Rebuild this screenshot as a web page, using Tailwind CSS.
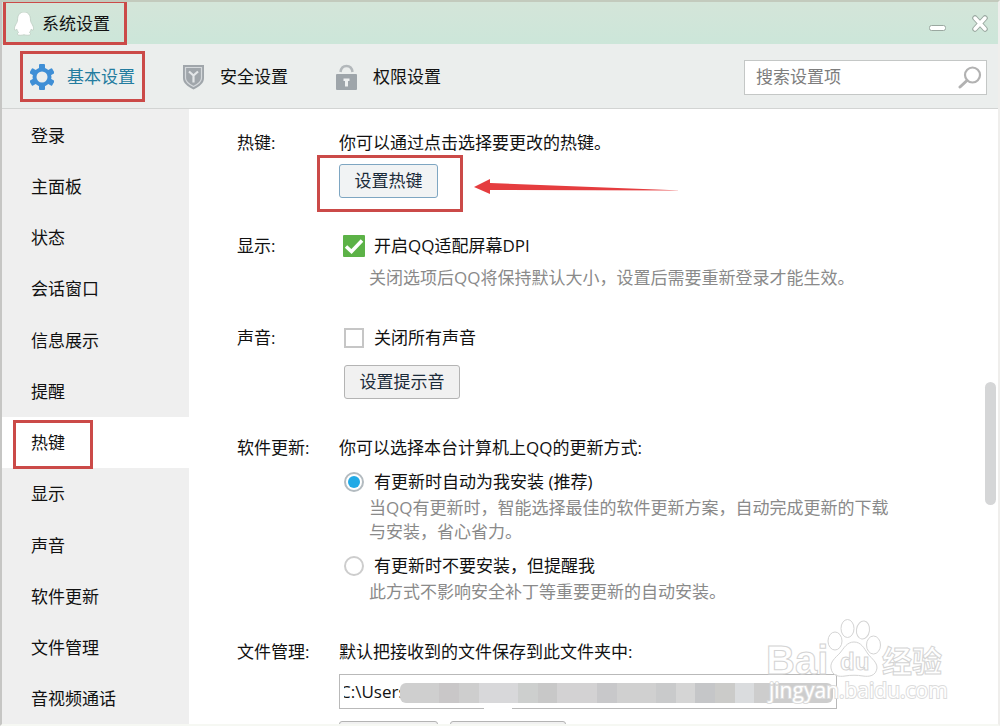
<!DOCTYPE html>
<html lang="zh">

<head>
    <meta charset="UTF-8">
    <meta name="viewport" content="width=device-width, initial-scale=1.0">
    <title>系统设置</title>
    <script src="https://cdn.jsdelivr.net/npm/@tailwindcss/browser@4"></script>
</head>

<body class="h-screen flex flex-col overflow-hidden bg-white border-t-2 border-t-[#c3cabd] border-l-2 border-l-[#c6c6c4] border-r-2 border-r-[#efeeec] border-b-2 border-b-[#f6f8f3] font-['Open_Sans','Noto_Sans_CJK_SC',sans-serif] text-[17px] leading-6 text-[#111111]">
    <!-- 标题栏 -->
    <header class="h-[42px] shrink-0 flex items-center justify-between pr-2 bg-linear-to-b from-[#d4e5d9] to-[#cce6d9]">
        <div class="relative flex items-center gap-2 pl-3 pt-0.5">
            <svg class="w-5 h-6" viewBox="0 0 20 24">
                <path d="M10 0C6 0 3.500 3 3.500 8c0 2-1 3-2 5-1 2-1.500 4-.8 5 .6.500 1.300 0 2-1 .300 1.500 1 2.500 1.800 3.500-1 .500-1.200 1.200-.9 2 .5 1 4.400 1 6.400.200 2 .800 5.900.800 6.400-.200.300-.800.100-1.500-.9-2 .800-1 1.500-2 1.800-3.500.7 1 1.400 1.500 2 1 .7-1 .2-3-.8-5-1-2-2-3-2-5 0-5-2.500-8-6.500-8z" fill="#fff" stroke="#bccdc2" stroke-width="0.800" />
            </svg>
            <h1>系统设置</h1>
            <span class="absolute left-[1px] -top-[10px] w-[124px] h-[45px] border-[3px] border-[#cb4a48]"></span>
        </div>
        <div class="flex items-center gap-[22px]">
            <button type="button" aria-label="最小化" class="w-5 h-5">
                <svg class="w-5 h-5" viewBox="0 0 20 20">
                    <rect x="1.500" y="12.500" width="16" height="5" rx="2" fill="#fff" stroke="#9aa8a0" />
                </svg>
            </button>
            <button type="button" aria-label="关闭" class="w-5 h-5">
                <svg class="w-5 h-5" viewBox="0 0 20 20" stroke-linecap="round">
                    <path d="M5 5l10 11M15 5L5 16" stroke="#9aa8a0" stroke-width="5.500" />
                    <path d="M5 5l10 11M15 5L5 16" stroke="#fff" stroke-width="3.500" />
                </svg>
            </button>
        </div>
    </header>

    <!-- 顶部标签 -->
    <div class="h-[65px] shrink-0 flex items-center justify-between pl-7 pr-[11px] pt-0.5 bg-[#ebeeed] border-b border-[#d2d4d3]">
        <nav class="flex items-center gap-12">
            <a href="#basic" class="relative flex items-center gap-[13px] text-[#237c9f]">
                <svg class="w-6 h-[26px]" viewBox="0 0 24 26">
                    <g fill="#3f8fd6">
                        <rect x="9" y="0" width="6" height="26" rx="1" />
                        <rect x="9" y="0" width="6" height="26" rx="1" transform="rotate(60 12 13)" />
                        <rect x="9" y="0" width="6" height="26" rx="1" transform="rotate(120 12 13)" />
                        <circle cx="12" cy="13" r="9.500" />
                    </g>
                    <circle cx="12" cy="13" r="5.500" fill="#ebeeed" />
                </svg>
                基本设置
                <span class="absolute -left-[10px] -top-[13px] w-[125px] h-[51px] border-[3px] border-[#cb4a48]"></span>
            </a>
            <a href="#security" class="flex items-center gap-[13px]">
                <svg class="w-6 h-[26px]" viewBox="0 0 24 26">
                    <path d="M0 1h21v13c0 5-4 8-10.500 11.500C4 22 0 19 0 14z" fill="#a0a6ab" />
                    <path d="M2.500 3.500h16v10.500c0 4-3 6-8 8.500-5-2.500-8-4.500-8-8.500z" fill="none" stroke="#d5d9dc" stroke-width="1.200" />
                    <path d="M6 7.500l4.500 4 4.500-4M10.500 11.500v7" fill="none" stroke="#e3e6e8" stroke-width="2.200" />
                </svg>
                安全设置
            </a>
            <a href="#privacy" class="flex items-center gap-[13px]">
                <svg class="w-6 h-[26px]" viewBox="0 0 24 26">
                    <path d="M4.500 8C5 4 7.500 2 10.500 2s5.500 2 6 6" fill="none" stroke="#b3b8bb" stroke-width="2.500" />
                    <rect x="0" y="10" width="21" height="16" rx="1" fill="#9ea5aa" />
                    <path d="M7.500 14.500h6v2.500h-1.500v5.500h-3v-5.500h-1.500z" fill="#eef0f0" />
                </svg>
                权限设置
            </a>
        </nav>
        <label class="flex items-center w-[243px] h-[35px] pl-[11px] pr-1 bg-white border border-[#c4c7c6]">
            <input type="text" aria-label="搜索" placeholder="搜索设置项" class="flex-1 min-w-0 outline-none placeholder:text-[#7d7d7d]">
            <svg class="w-6 h-6" viewBox="0 0 24 24" fill="none" stroke="#b2b2b2" stroke-linecap="round">
                <circle cx="14.500" cy="10" r="7.500" stroke-width="2.200" />
                <path d="M9 15.500l-7 6.500" stroke-width="3" />
            </svg>
        </label>
    </div>

    <div class="relative flex-1 min-h-0 flex">
        <!-- 左侧菜单 -->
        <nav class="w-[187px] shrink-0 flex flex-col bg-[#efefef]">
            <a href="#login" class="flex-1 flex items-center pl-[29px] pt-0.5">登录</a>
            <a href="#panel" class="flex-1 flex items-center pl-[29px] pt-0.5">主面板</a>
            <a href="#status" class="flex-1 flex items-center pl-[29px] pt-0.5">状态</a>
            <a href="#chat" class="flex-1 flex items-center pl-[29px] pt-0.5">会话窗口</a>
            <a href="#info" class="flex-1 flex items-center pl-[29px] pt-0.5">信息展示</a>
            <a href="#remind" class="flex-1 flex items-center pl-[29px] pt-0.5">提醒</a>
            <a href="#hotkey" class="relative flex-1 flex items-center pl-[29px] pt-0.5 bg-white">
                热键
                <span class="absolute left-[11px] top-[3px] w-20 h-[49px] border-[3px] border-[#cb4a48]"></span>
            </a>
            <a href="#display" class="flex-1 flex items-center pl-[29px] pt-0.5">显示</a>
            <a href="#sound" class="flex-1 flex items-center pl-[29px] pt-0.5">声音</a>
            <a href="#update" class="flex-1 flex items-center pl-[29px] pt-0.5">软件更新</a>
            <a href="#files" class="flex-1 flex items-center pl-[29px] pt-0.5">文件管理</a>
            <a href="#av" class="flex-1 flex items-center pl-[29px] pt-0.5">音视频通话</a>
        </nav>

        <!-- 设置内容 -->
        <main class="flex-1 min-w-0 overflow-hidden flex flex-col gap-9 pt-[22px] pl-12 pr-20">
            <section class="grid grid-cols-[102px_1fr]">
                <h2>热键:</h2>
                <div>
                    <p>你可以通过点击选择要更改的热键。</p>
                    <div class="relative mt-[9px] w-fit">
                        <button type="button" class="block w-[99px] h-[34px] rounded-[3px] border border-[#7ea6c2] bg-[#f1f3f4] text-[#1b2b3a]">设置热键</button>
                        <span class="absolute -left-[22px] -top-[9px] w-[146px] h-[57px] border-[3px] border-[#cb4a48]"></span>
                        <svg class="absolute left-[135px] top-[14px] w-[210px] h-4 max-w-none" viewBox="0 0 210 16">
                            <path d="M0 9L16 1v4L208 12.500 16 12v4z" fill="#e53d3f" />
                        </svg>
                    </div>
                </div>
            </section>

            <section class="grid grid-cols-[102px_1fr]">
                <h2>显示:</h2>
                <div>
                    <label class="flex items-center gap-[9px] pl-1">
                        <span class="relative grid place-items-center w-[22px] h-[22px]">
                            <input type="checkbox" checked class="appearance-none w-[22px] h-[22px] rounded-[1px] bg-[#5cb247]">
                            <svg class="absolute inset-0 w-[22px] h-[22px]" viewBox="0 0 22 22">
                                <path d="M3 11.500l5.500 5L19 5.500" fill="none" stroke="#fff" stroke-width="3.500" />
                            </svg>
                        </span>
                        开启QQ适配屏幕DPI
                    </label>
                    <p class="mt-2 pl-[30px] text-[#8a8a8a]">关闭选项后QQ将保持默认大小，设置后需要重新登录才能生效。</p>
                </div>
            </section>

            <section class="grid grid-cols-[102px_1fr]">
                <h2>声音:</h2>
                <div>
                    <label class="flex items-center gap-[9px] pl-1">
                        <span class="grid place-items-center w-[22px] h-[22px]">
                            <input type="checkbox" class="appearance-none w-5 h-5 border-2 border-[#c6c6c6] bg-white">
                        </span>
                        关闭所有声音
                    </label>
                    <button type="button" class="block mt-[15px] ml-[5px] w-[116px] h-[34px] rounded-[3px] border border-[#b4b4b4] bg-[#f1f1f1] text-[#1b2b3a]">设置提示音</button>
                </div>
            </section>

            <section class="grid grid-cols-[102px_1fr] pt-px">
                <h2>软件更新:</h2>
                <div>
                    <p>你可以选择本台计算机上QQ的更新方式:</p>
                    <label class="mt-[10px] flex items-center gap-[9px] pl-1">
                        <span class="relative grid place-items-center w-[22px] h-[22px]">
                            <input type="radio" name="update" checked class="appearance-none w-5 h-5 rounded-full border-2 border-[#b3bbc0] bg-white">
                            <span class="absolute left-[5px] top-[5px] w-3 h-3 rounded-full bg-[#22aae6]"></span>
                        </span>
                        有更新时自动为我安装 (推荐)
                    </label>
                    <p class="mt-[2px] pl-[30px] text-[#8a8a8a]">当QQ有更新时，智能选择最佳的软件更新方案，自动完成更新的下载<br>与安装，省心省力。</p>
                    <label class="mt-[10px] flex items-center gap-[9px] pl-1">
                        <span class="grid place-items-center w-[22px] h-[22px]">
                            <input type="radio" name="update" class="appearance-none w-5 h-5 rounded-full border-2 border-[#cdcdcd] bg-white">
                        </span>
                        有更新时不要安装，但提醒我
                    </label>
                    <p class="mt-[2px] pl-[30px] text-[#8a8a8a]">此方式不影响安全补丁等重要更新的自动安装。</p>
                </div>
            </section>

            <section class="grid grid-cols-[102px_1fr]">
                <h2>文件管理:</h2>
                <div>
                    <p>默认把接收到的文件保存到此文件夹中:</p>
                    <div class="relative mt-[10px] w-[498px]">
                        <input type="text" aria-label="文件夹" value="C:\Users" class="block w-full h-[35px] pl-1 -indent-1 border border-[#b9b9b9] bg-white outline-none">
                        <!-- 路径打码 -->
                        <div class="absolute left-[61px] right-1 top-[9px] h-5 flex rounded-md overflow-hidden">
                            <span class="flex-2 bg-[#cfcfcf]"></span>
                            <span class="flex-1 bg-[#c9c7c8]"></span>
                            <span class="flex-1 bg-[#cecece]"></span>
                            <span class="flex-2 bg-[#d8d8da]"></span>
                            <span class="flex-1 bg-[#cdcfce]"></span>
                            <span class="flex-1 bg-[#c8c8c8]"></span>
                            <span class="flex-2 bg-[#d3d2d3]"></span>
                            <span class="flex-1 bg-[#c8c8ca]"></span>
                            <span class="flex-2 bg-[#d0d0d0]"></span>
                            <span class="flex-1 bg-[#c9cacb]"></span>
                            <span class="flex-1 bg-[#d5d5d5]"></span>
                            <span class="flex-1 bg-[#c5c6c8]"></span>
                            <span class="flex-1 bg-[#cbcbc9]"></span>
                            <span class="flex-1 bg-[#dadcde]"></span>
                            <span class="flex-4 bg-[#cdcdcd]"></span>
                        </div>
                        <span class="absolute left-[145px] bottom-0 w-7 h-1 bg-white"></span>
                    </div>
                    <div class="mt-3 flex gap-3">
                        <button type="button" aria-label="更改目录" class="w-[99px] h-[35px] rounded-[3px] border border-[#b4b4b4] bg-[#f1f1f1]"></button>
                        <button type="button" aria-label="打开文件夹" class="w-[116px] h-[35px] rounded-[3px] border border-[#b4b4b4] bg-[#f1f1f1]"></button>
                    </div>
                </div>
            </section>
        </main>

        <!-- 滚动条 -->
        <div class="absolute right-[2px] top-[273px] w-[11px] h-[123px] rounded-full bg-[#d5d6d7]"></div>

        <!-- 水印 -->
        <svg class="absolute right-12 bottom-4 w-[184px] h-[94px]" viewBox="0 0 184 94" fill="#ffffff" fill-opacity="0.700" stroke="#d4d4d4" stroke-width="1">
            <text x="0" y="60" font-family="Liberation Sans, sans-serif" font-weight="700" font-size="40">Bai</text>
            <ellipse cx="69" cy="27" rx="7" ry="9" />
            <ellipse cx="81.500" cy="14.500" rx="6.500" ry="9" />
            <ellipse cx="97" cy="16" rx="6.500" ry="9" transform="rotate(8 97 16)" />
            <ellipse cx="107.500" cy="31" rx="7" ry="9" />
            <path d="M88 28c-7 0-10 6-14 11-5 5-10 9-9 15 1 8 8 9 14 8 6-1 12-1 18 0 6 1 13 0 14-8 0-6-5-9-9-14-4-6-7-12-14-12z" />
            <text x="74" y="56" font-family="Liberation Sans, sans-serif" font-weight="700" font-size="24">du</text>
            <text x="116" y="58" font-family="Noto Sans CJK SC, sans-serif" font-weight="700" font-size="30">经验</text>
            <text x="3" y="84" font-family="Open Sans, sans-serif" font-size="21" fill-opacity="1" stroke="#dcdcdc" stroke-width="2" paint-order="stroke">jingyan.baidu.com</text>
        </svg>
    </div>
</body>

</html>
